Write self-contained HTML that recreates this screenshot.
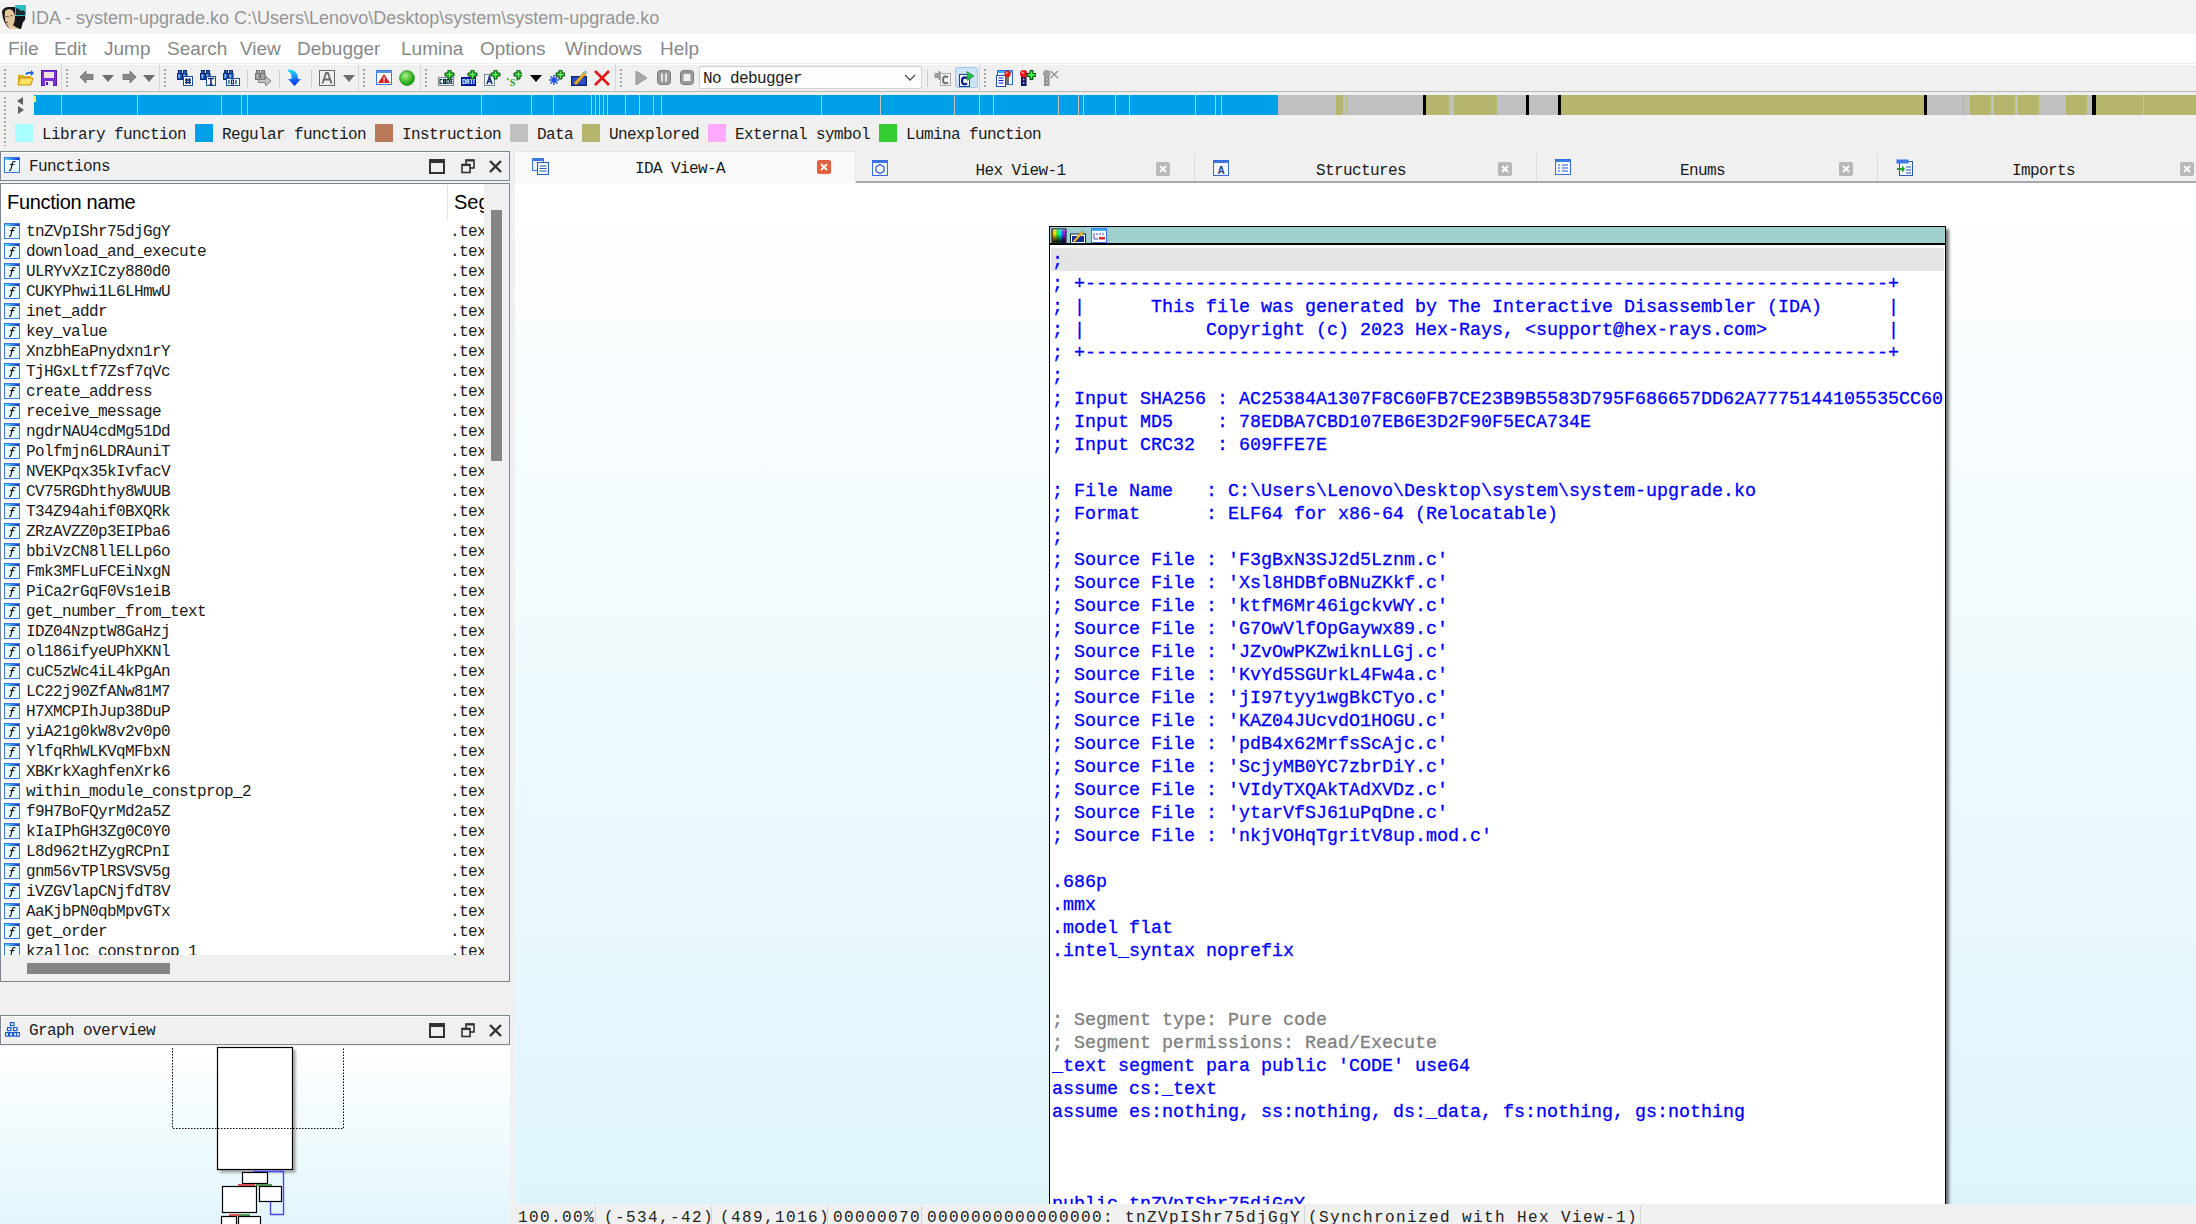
<!DOCTYPE html>
<html><head><meta charset="utf-8"><style>
*{margin:0;padding:0;box-sizing:border-box}
html,body{width:2196px;height:1224px;overflow:hidden;background:#f0f0f0;position:relative;font-family:"Liberation Sans",sans-serif}
.a{position:absolute}
.menu{top:38px;font-size:19px;color:#888888;white-space:nowrap}
.grip{width:2px;height:20px;background:repeating-linear-gradient(transparent 0 1px,#a8a8a8 1px 3px,transparent 3px 4px)}
.sim{font-family:"Liberation Mono",monospace;font-size:16px;letter-spacing:-0.6px;color:#1a1a1a;white-space:nowrap;line-height:16px}
.ida{left:0;font-family:"Liberation Mono",monospace;font-size:18.33px;line-height:23px;white-space:pre;-webkit-text-stroke:0.3px currentColor}
.stat{top:1208px;font-family:"Liberation Mono",monospace;font-size:16px;letter-spacing:1.4px;line-height:20px;white-space:pre;color:#222}
</style></head><body>
<div class="a" style="left:0;top:0;width:2196px;height:34px;background:#f3f3f3"></div>
<svg class="a" style="left:0;top:0" width="30" height="34" viewBox="0 0 30 34">
<path d="M2 12 Q3 7 9 7 L15 7 L15 16 L25 16 Q26 20 23 22 Q22 26 21 29 L10 29 Q3 24 2 12Z" fill="#15161a"/>
<path d="M5 11 Q8 8 12 10 Q15 13 15 18 Q15 22 13 25 Q15 27 20 29 L9 29 Q9 27 7 25 Q4 21 5 11Z" fill="#e2c9a0"/>
<path d="M5 17 Q7 16 9 17 M10 16 Q12 15 13 16" stroke="#8a7a60" stroke-width="1"/>
<path d="M6 22 Q7 23 8 22" stroke="#b04030" stroke-width="1.2"/>
<rect x="15" y="5" width="11" height="11" rx="1" fill="#30bcc4"/>
<path d="M16 8 L19 9 L21 11 L23 10 L25 12 V15 H16Z" fill="#1a2a30"/>
</svg>
<div class="a" style="left:31px;top:8px;font-size:18px;color:#959595;white-space:nowrap">IDA - system-upgrade.ko C:\Users\Lenovo\Desktop\system\system-upgrade.ko</div>

<div class="a" style="left:0;top:34px;width:2196px;height:29px;background:#fff"></div>
<div class="a menu" style="left:8px">File</div>
<div class="a menu" style="left:54px">Edit</div>
<div class="a menu" style="left:104px">Jump</div>
<div class="a menu" style="left:167px">Search</div>
<div class="a menu" style="left:240px">View</div>
<div class="a menu" style="left:297px">Debugger</div>
<div class="a menu" style="left:401px">Lumina</div>
<div class="a menu" style="left:480px">Options</div>
<div class="a menu" style="left:565px">Windows</div>
<div class="a menu" style="left:660px">Help</div>
<div class="a" style="left:0;top:63px;width:2196px;height:29px;background:#f0f0f0;border-bottom:1px solid #b8b8b8;border-top:1px solid #f0f0f0;box-shadow:inset 0 1px 0 #fff"></div>
<div class="a grip" style="left:4px;top:68px"></div>
<div class="a grip" style="left:66px;top:68px"></div>
<div class="a grip" style="left:164px;top:68px"></div>
<div class="a grip" style="left:363px;top:68px"></div>
<div class="a grip" style="left:425px;top:68px"></div>
<div class="a grip" style="left:620px;top:68px"></div>
<div class="a grip" style="left:984px;top:68px"></div>
<div class="a" style="left:61px;top:64px;width:1px;height:27px;background:#d6d6d6"></div>
<div class="a" style="left:159px;top:64px;width:1px;height:27px;background:#d6d6d6"></div>
<div class="a" style="left:358px;top:64px;width:1px;height:27px;background:#d6d6d6"></div>
<div class="a" style="left:420px;top:64px;width:1px;height:27px;background:#d6d6d6"></div>
<div class="a" style="left:615px;top:64px;width:1px;height:27px;background:#d6d6d6"></div>
<div class="a" style="left:979px;top:64px;width:1px;height:27px;background:#d6d6d6"></div>
<div class="a" style="left:247px;top:70px;width:1px;height:17px;background:#cfcfcf"></div>
<div class="a" style="left:279px;top:70px;width:1px;height:17px;background:#cfcfcf"></div>
<div class="a" style="left:311px;top:70px;width:1px;height:17px;background:#cfcfcf"></div>
<div class="a" style="left:927px;top:70px;width:1px;height:17px;background:#cfcfcf"></div>
<svg class="a" style="left:17px;top:70px" width="17" height="16" viewBox="0 0 17 16"><path d="M1 5 H6 L7 6 H14 V15 H1Z" fill="#e0a820"/><path d="M3 8 H16 L14 15 H1Z" fill="#ffe060" stroke="#c89010" stroke-width="1"/><path d="M8 4 Q10 1 14 2 L14 0 L17 3 L14 6 L14 4 Q11 3 9 5Z" fill="#2060e0"/></svg>
<svg class="a" style="left:41px;top:70px" width="16" height="16" viewBox="0 0 16 16"><rect x="0.5" y="0.5" width="15" height="15" fill="#7a30d8" stroke="#5a18b0"/><rect x="3" y="2" width="10" height="6" fill="#f0e0e0"/><rect x="4" y="11" width="8" height="5" fill="#e8e8f8"/><rect x="5" y="12" width="2" height="3" fill="#5a18b0"/></svg>
<svg class="a" style="left:80px;top:70px" width="14" height="14" viewBox="0 0 14 14"><path d="M0 7 L6 1 V4.5 H13 V9.5 H6 V13Z" fill="#8a8a8a" stroke="#6a6a6a" stroke-width="0.8"/></svg>
<svg class="a" style="left:102px;top:75px" width="12" height="7" viewBox="0 0 12 7"><path d="M0 0 H12 L6 7Z" fill="#6e6e6e"/></svg>
<svg class="a" style="left:122px;top:70px" width="14" height="14" viewBox="0 0 14 14"><path d="M14 7 L8 1 V4.5 H1 V9.5 H8 V13Z" fill="#8a8a8a" stroke="#6a6a6a" stroke-width="0.8"/></svg>
<svg class="a" style="left:143px;top:75px" width="12" height="7" viewBox="0 0 12 7"><path d="M0 0 H12 L6 7Z" fill="#6e6e6e"/></svg>
<svg class="a" style="left:177px;top:70px" width="17" height="16" viewBox="0 0 17 16"><g stroke="#0a2a70" stroke-width="1"><rect x="1.5" y="0.5" width="3" height="3" fill="#2a62c8"/><rect x="6.5" y="0.5" width="3" height="3" fill="#2a62c8"/><rect x="0.5" y="3.5" width="4.5" height="6" fill="#2a62c8"/><rect x="5.5" y="3.5" width="4.5" height="6" fill="#2a62c8"/></g><rect x="1.5" y="4.5" width="1.5" height="3" fill="#8ec8f8"/><rect x="6.5" y="4.5" width="1.5" height="3" fill="#8ec8f8"/><rect x="6.5" y="6.5" width="9" height="9" fill="#fff" stroke="#1a4e9a"/><path d="M9.5 8 V14 M12.5 8 V14 M8 10 H14 M8 12.5 H14" stroke="#0c2e6a" stroke-width="1.3"/></svg>
<svg class="a" style="left:200px;top:70px" width="17" height="16" viewBox="0 0 17 16"><g stroke="#0a2a70" stroke-width="1"><rect x="1.5" y="0.5" width="3" height="3" fill="#2a62c8"/><rect x="6.5" y="0.5" width="3" height="3" fill="#2a62c8"/><rect x="0.5" y="3.5" width="4.5" height="6" fill="#2a62c8"/><rect x="5.5" y="3.5" width="4.5" height="6" fill="#2a62c8"/></g><rect x="1.5" y="4.5" width="1.5" height="3" fill="#8ec8f8"/><rect x="6.5" y="4.5" width="1.5" height="3" fill="#8ec8f8"/><rect x="6.5" y="6.5" width="9" height="9" fill="#fff" stroke="#1a4e9a"/><path d="M8 8.5 H14 M11 8.5 V14.5 M9.5 14.5 H12.5" stroke="#0c2e6a" stroke-width="1.6"/></svg>
<svg class="a" style="left:223px;top:70px" width="17" height="16" viewBox="0 0 17 16"><g stroke="#0a2a70" stroke-width="1"><rect x="1.5" y="0.5" width="3" height="3" fill="#2a62c8"/><rect x="6.5" y="0.5" width="3" height="3" fill="#2a62c8"/><rect x="0.5" y="3.5" width="4.5" height="6" fill="#2a62c8"/><rect x="5.5" y="3.5" width="4.5" height="6" fill="#2a62c8"/></g><rect x="1.5" y="4.5" width="1.5" height="3" fill="#8ec8f8"/><rect x="6.5" y="4.5" width="1.5" height="3" fill="#8ec8f8"/><rect x="3.5" y="8.5" width="13" height="7" fill="#fff" stroke="#1a4e9a"/><path d="M6 10 V14 M8.5 10 H10.5 V14 H8.5Z M13 10 V14" stroke="#0c2e6a" stroke-width="1.2" fill="none"/></svg>
<svg class="a" style="left:255px;top:70px" width="17" height="16" viewBox="0 0 17 16"><g stroke="#707070" stroke-width="1"><rect x="1.5" y="0.5" width="3" height="3" fill="#a8a8a8"/><rect x="6.5" y="0.5" width="3" height="3" fill="#a8a8a8"/><rect x="0.5" y="3.5" width="4.5" height="6" fill="#a8a8a8"/><rect x="5.5" y="3.5" width="4.5" height="6" fill="#a8a8a8"/></g><path d="M3.5 9.5 H10.5 V6 L16 11 L10.5 16 V12.5 H3.5Z" fill="#c4c4c4" stroke="#808080" stroke-width="1"/></svg>
<svg class="a" style="left:287px;top:69px" width="15" height="18" viewBox="0 0 15 18"><defs><linearGradient id="ba" x1="0" y1="0" x2="0" y2="1"><stop offset="0" stop-color="#30e0f8"/><stop offset="1" stop-color="#0020f0"/></linearGradient></defs><path d="M1 0.5 Q11 0 11 10 H14 L7.5 17 L1 10 H4.5 Q5 3 1 2.5Z" fill="url(#ba)"/></svg>
<svg class="a" style="left:319px;top:70px" width="16" height="16" viewBox="0 0 16 16"><rect x="0.5" y="0.5" width="15" height="15" fill="none" stroke="#6a6a6a"/><path d="M3.5 13.5 L7 3 H9 L12.5 13.5 M5 9.5 H11" stroke="#6a6a6a" stroke-width="1.8" fill="none"/></svg>
<svg class="a" style="left:343px;top:75px" width="12" height="7" viewBox="0 0 12 7"><path d="M0 0 H12 L6 7Z" fill="#6e6e6e"/></svg>
<svg class="a" style="left:376px;top:70px" width="16" height="15" viewBox="0 0 16 15"><rect x="0.5" y="0.5" width="15" height="14" fill="#fff" stroke="#3c7ad8"/><rect x="1" y="1" width="14" height="2" fill="#5a9ae8"/><path d="M8 4 L14 13 H2Z" fill="#d82020"/><rect x="7.4" y="7" width="1.2" height="3.5" fill="#fff"/><rect x="7.4" y="11" width="1.2" height="1.2" fill="#fff"/></svg>
<svg class="a" style="left:399px;top:70px" width="16" height="16" viewBox="0 0 16 16"><defs><radialGradient id="gb" cx="0.4" cy="0.35" r="0.6"><stop offset="0" stop-color="#a8f080"/><stop offset="1" stop-color="#18a010"/></radialGradient></defs><circle cx="8" cy="8" r="7.5" fill="url(#gb)" stroke="#208818" stroke-width="0.6"/></svg>
<svg class="a" style="left:437px;top:70px" width="18" height="16" viewBox="0 0 18 16"><rect x="1.5" y="7.5" width="15" height="8" fill="#eef4fc" stroke="#7a8894"/><g stroke="#0a2a38" stroke-width="1.1" fill="none"><path d="M5 9.5 H3 V13.5 H5"/><rect x="6.5" y="9.5" width="2" height="4"/><path d="M10 9.5 H11.5 L12.5 10.5 V12.5 L11.5 13.5 H10Z"/><path d="M15.5 9.5 H14 V13.5 H15.5 M14 11.5 H15.5"/></g><path d="M11.0 0.0 h3 v3 h3 v3 h-3 v3 h-3 v-3 h-3 v-3 h3z" fill="#28d028" stroke="#0a4a0a" stroke-width="1"/><path d="M12.5 1.5 V7.5 M9.5 4.5 H15.5" stroke="#70f070" stroke-width="0.8"/></svg>
<svg class="a" style="left:461px;top:70px" width="18" height="16" viewBox="0 0 18 16"><rect x="0.5" y="7.5" width="14" height="8" fill="#1020c0" stroke="#001080"/><g stroke="#c0f4ff" stroke-width="1.1" fill="none"><path d="M2 9.5 H3.5 L4.5 10.5 V12.5 L3.5 13.5 H2Z"/><path d="M5.8 14 V10 L6.8 9.3 L7.8 10 V14 M5.8 11.8 H7.8"/><path d="M9 9.5 H12 M10.5 9.5 V14"/><path d="M12.8 14 V10 L13.5 9.3 L14 10"/></g><path d="M10.0 0.0 h3 v3 h3 v3 h-3 v3 h-3 v-3 h-3 v-3 h3z" fill="#28d028" stroke="#0a4a0a" stroke-width="1"/><path d="M11.5 1.5 V7.5 M8.5 4.5 H14.5" stroke="#70f070" stroke-width="0.8"/></svg>
<svg class="a" style="left:484px;top:70px" width="18" height="16" viewBox="0 0 18 16"><rect x="0.5" y="4.5" width="10" height="11" fill="#eef4fc" stroke="#7a8894"/><path d="M3 14 L5.5 7 L8 14 M4 11.5 H7" stroke="#0a2a70" stroke-width="1.5" fill="none"/><circle cx="5.5" cy="6.5" r="1" fill="#0a2a70"/><path d="M10.0 0.0 h3 v3 h3 v3 h-3 v3 h-3 v-3 h-3 v-3 h3z" fill="#28d028" stroke="#0a4a0a" stroke-width="1"/><path d="M11.5 1.5 V7.5 M8.5 4.5 H14.5" stroke="#70f070" stroke-width="0.8"/></svg>
<svg class="a" style="left:506px;top:70px" width="16" height="16" viewBox="0 0 16 16"><text x="6.5" y="15.5" font-size="10" font-weight="bold" text-anchor="middle" fill="#2a9a1a" font-family="Liberation Serif">S</text><path d="M2 8 Q1.5 9.5 2.5 10 M11 8.5 Q11.5 10 10.5 10.5" stroke="#2a9a1a" stroke-width="1.3" fill="none"/><path d="M11.0 0.0 h3 v3 h3 v3 h-3 v3 h-3 v-3 h-3 v-3 h3z" fill="#28d028" stroke="#0a4a0a" stroke-width="1"/><path d="M12.5 1.5 V7.5 M9.5 4.5 H15.5" stroke="#70f070" stroke-width="0.8"/></svg>
<svg class="a" style="left:530px;top:75px" width="12" height="7" viewBox="0 0 12 7"><path d="M0 0 H12 L6 7Z" fill="#000"/></svg>
<svg class="a" style="left:548px;top:70px" width="17" height="16" viewBox="0 0 17 16"><path d="M6 5 V15 M1 10 H11 M2.5 6.5 L9.5 13.5 M9.5 6.5 L2.5 13.5" stroke="#2050e0" stroke-width="1.5"/><path d="M11.0 0.0 h3 v3 h3 v3 h-3 v3 h-3 v-3 h-3 v-3 h3z" fill="#28d028" stroke="#0a4a0a" stroke-width="1"/><path d="M12.5 1.5 V7.5 M9.5 4.5 H15.5" stroke="#70f070" stroke-width="0.8"/></svg>
<svg class="a" style="left:571px;top:70px" width="17" height="16" viewBox="0 0 17 16"><rect x="0.5" y="6.5" width="15" height="9" fill="#2040b0" stroke="#102070"/><rect x="2" y="8" width="12" height="6" fill="#3050c8"/><path d="M3 13 L13 2 L15 4 L5 15Z" fill="#f0b020" stroke="#a07010" stroke-width="0.6"/><circle cx="14.5" cy="2" r="1.5" fill="#80c0f0"/></svg>
<svg class="a" style="left:594px;top:70px" width="16" height="16" viewBox="0 0 16 16"><path d="M1 1 L15 15 M15 1 L1 15" stroke="#e01818" stroke-width="2.6"/></svg>
<svg class="a" style="left:635px;top:71px" width="13" height="14" viewBox="0 0 13 14"><path d="M1 0 L12 7 L1 14Z" fill="#a8a8a8" stroke="#8a8a8a" stroke-width="0.8"/></svg>
<svg class="a" style="left:657px;top:70px" width="14" height="15" viewBox="0 0 14 15"><rect x="0.5" y="0.5" width="13" height="14" rx="3" fill="#9a9a9a" stroke="#7a7a7a"/><rect x="4" y="3.5" width="2" height="8" fill="#e8e8e8"/><rect x="8" y="3.5" width="2" height="8" fill="#e8e8e8"/></svg>
<svg class="a" style="left:680px;top:70px" width="14" height="15" viewBox="0 0 14 15"><rect x="0.5" y="0.5" width="13" height="14" rx="3" fill="#9a9a9a" stroke="#7a7a7a"/><rect x="3.5" y="4" width="7" height="7" fill="#f0f0f0"/></svg>
<div class="a" style="left:699px;top:66px;width:223px;height:23px;background:#fdfdfd;border:1px solid #d0d0d0;border-radius:2px"></div>
<div class="a sim" style="left:703px;top:71px">No debugger</div>
<svg class="a" style="left:904px;top:74px" width="12" height="8" viewBox="0 0 12 8"><path d="M1 1 L6 6 L11 1" stroke="#505050" stroke-width="1.3" fill="none"/></svg>
<svg class="a" style="left:934px;top:69px" width="18" height="18" viewBox="0 0 18 18"><path d="M1 4.5 H5 V2 L9.5 6.5 L5 11 V8.5 H1Z" fill="#a0a0a0" stroke="#808080" stroke-width="0.7"/><rect x="6.5" y="4.5" width="10" height="12" fill="#f8f8f8" stroke="#a8a8a8"/><path d="M14 8.5 Q13 7.3 11.5 7.3 Q9 7.5 9 11 Q9 14.3 11.5 14.3 Q13 14.3 14 13.3" stroke="#707070" stroke-width="2" fill="none"/></svg>
<div class="a" style="left:955px;top:67px;width:23px;height:21px;background:#cce4f7;border:1px solid #99c9ef;border-radius:3px"></div>
<svg class="a" style="left:958px;top:70px" width="18" height="18" viewBox="0 0 18 18"><rect x="1.5" y="4.5" width="10" height="12" fill="#f4f8ff" stroke="#1a3e90"/><path d="M9 8.5 Q8 7.3 6.5 7.3 Q4 7.5 4 11 Q4 14.3 6.5 14.3 Q8 14.3 9 13.3" stroke="#0a1a80" stroke-width="2.2" fill="none"/><path d="M9 1.5 L16 6 L9 10.5Z" fill="#20c040" stroke="#108020" stroke-width="0.6"/></svg>
<svg class="a" style="left:996px;top:69px" width="18" height="18" viewBox="0 0 18 18"><rect x="1.5" y="1.5" width="15" height="14" fill="#eaf4ff" stroke="#2a6ad8"/><rect x="2" y="2" width="14" height="2" fill="#40b0f0"/><rect x="0.5" y="6.5" width="9" height="11" fill="#f8fbff" stroke="#2050a0"/><path d="M2.5 9 H7.5 M2.5 11.5 H7.5 M2.5 14 H7.5" stroke="#1020c0" stroke-width="1.1"/><rect x="10" y="7" width="3" height="8" fill="#707070"/><circle cx="11.5" cy="5" r="3.2" fill="#e81818"/><circle cx="10.8" cy="4" r="1" fill="#ff9090"/></svg>
<svg class="a" style="left:1018px;top:69px" width="18" height="18" viewBox="0 0 18 18"><rect x="3" y="7" width="5.5" height="10" fill="#0a1060"/><circle cx="5.7" cy="10.5" r="1" fill="#b0b0a0"/><circle cx="5.7" cy="14" r="1" fill="#b0b0a0"/><circle cx="5.7" cy="4.8" r="3.7" fill="#e81818"/><circle cx="4.8" cy="3.6" r="1.2" fill="#ff9090"/><path d="M12.0 1.5 h3 v3 h3 v3 h-3 v3 h-3 v-3 h-3 v-3 h3z" fill="#28d028" stroke="#0a4a0a" stroke-width="1"/><path d="M13.5 3 V9 M10.5 6 H16.5" stroke="#70f070" stroke-width="0.8"/></svg>
<svg class="a" style="left:1041px;top:69px" width="20" height="18" viewBox="0 0 20 18"><rect x="3" y="7" width="5.5" height="10" fill="#909090"/><circle cx="5.7" cy="10.5" r="1" fill="#c8c8c8"/><circle cx="5.7" cy="14" r="1" fill="#c8c8c8"/><circle cx="5.7" cy="4.8" r="3.7" fill="#a0a0a0"/><path d="M9.5 2 L17 9 M17 2 L9.5 9" stroke="#909090" stroke-width="1.3"/></svg>
<div class="a grip" style="left:4px;top:96px;height:50px"></div>
<svg class="a" style="left:16px;top:96px" width="10" height="18" viewBox="0 0 10 18"><path d="M7 1 L1 5 L7 9Z M2 10 L8 14 L2 18Z" fill="#606060"/></svg>
<div class="a" style="left:34px;top:95px;width:1244px;height:20px;background:#00a0e8"></div>
<div class="a" style="left:1278px;top:95px;width:58px;height:20px;background:#c0c0c0"></div>
<div class="a" style="left:1336px;top:95px;width:7px;height:20px;background:#b5b56d"></div>
<div class="a" style="left:1343px;top:95px;width:2px;height:20px;background:#c0c0c0"></div>
<div class="a" style="left:1345px;top:95px;width:2px;height:20px;background:#b5b56d"></div>
<div class="a" style="left:1347px;top:95px;width:76px;height:20px;background:#c0c0c0"></div>
<div class="a" style="left:1423px;top:95px;width:3px;height:20px;background:#000"></div>
<div class="a" style="left:1426px;top:95px;width:23px;height:20px;background:#b5b56d"></div>
<div class="a" style="left:1449px;top:95px;width:5px;height:20px;background:#c0c0c0"></div>
<div class="a" style="left:1454px;top:95px;width:43px;height:20px;background:#b5b56d"></div>
<div class="a" style="left:1497px;top:95px;width:29px;height:20px;background:#c0c0c0"></div>
<div class="a" style="left:1526px;top:95px;width:3px;height:20px;background:#000"></div>
<div class="a" style="left:1529px;top:95px;width:29px;height:20px;background:#c0c0c0"></div>
<div class="a" style="left:1558px;top:95px;width:3px;height:20px;background:#000"></div>
<div class="a" style="left:1561px;top:95px;width:363px;height:20px;background:#b5b56d"></div>
<div class="a" style="left:1924px;top:95px;width:3px;height:20px;background:#000"></div>
<div class="a" style="left:1927px;top:95px;width:36px;height:20px;background:#c0c0c0"></div>
<div class="a" style="left:1963px;top:95px;width:1px;height:20px;background:#b5b56d"></div>
<div class="a" style="left:1964px;top:95px;width:6px;height:20px;background:#c0c0c0"></div>
<div class="a" style="left:1970px;top:95px;width:21px;height:20px;background:#b5b56d"></div>
<div class="a" style="left:1991px;top:95px;width:3px;height:20px;background:#c0c0c0"></div>
<div class="a" style="left:1994px;top:95px;width:21px;height:20px;background:#b5b56d"></div>
<div class="a" style="left:2015px;top:95px;width:3px;height:20px;background:#c0c0c0"></div>
<div class="a" style="left:2018px;top:95px;width:21px;height:20px;background:#b5b56d"></div>
<div class="a" style="left:2039px;top:95px;width:27px;height:20px;background:#c0c0c0"></div>
<div class="a" style="left:2066px;top:95px;width:21px;height:20px;background:#b5b56d"></div>
<div class="a" style="left:2087px;top:95px;width:5px;height:20px;background:#c0c0c0"></div>
<div class="a" style="left:2092px;top:95px;width:4px;height:20px;background:#000"></div>
<div class="a" style="left:2096px;top:95px;width:100px;height:20px;background:#b5b56d"></div>
<div class="a" style="left:61px;top:95px;width:1px;height:20px;background:#c4c0bc"></div>
<div class="a" style="left:137px;top:95px;width:1px;height:20px;background:#c4c0bc"></div>
<div class="a" style="left:221px;top:95px;width:1px;height:20px;background:#c4c0bc"></div>
<div class="a" style="left:241px;top:95px;width:1px;height:20px;background:#c4c0bc"></div>
<div class="a" style="left:247px;top:95px;width:1px;height:20px;background:#c4c0bc"></div>
<div class="a" style="left:481px;top:95px;width:1px;height:20px;background:#c4c0bc"></div>
<div class="a" style="left:531px;top:95px;width:1px;height:20px;background:#c4c0bc"></div>
<div class="a" style="left:553px;top:95px;width:1px;height:20px;background:#c4c0bc"></div>
<div class="a" style="left:591px;top:95px;width:1px;height:20px;background:#c4c0bc"></div>
<div class="a" style="left:595px;top:95px;width:1px;height:20px;background:#c4c0bc"></div>
<div class="a" style="left:599px;top:95px;width:1px;height:20px;background:#c4c0bc"></div>
<div class="a" style="left:603px;top:95px;width:1px;height:20px;background:#c4c0bc"></div>
<div class="a" style="left:607px;top:95px;width:1px;height:20px;background:#c4c0bc"></div>
<div class="a" style="left:625px;top:95px;width:1px;height:20px;background:#c4c0bc"></div>
<div class="a" style="left:639px;top:95px;width:1px;height:20px;background:#c4c0bc"></div>
<div class="a" style="left:653px;top:95px;width:1px;height:20px;background:#c4c0bc"></div>
<div class="a" style="left:661px;top:95px;width:1px;height:20px;background:#c4c0bc"></div>
<div class="a" style="left:821px;top:95px;width:1px;height:20px;background:#c4c0bc"></div>
<div class="a" style="left:880px;top:95px;width:1px;height:20px;background:#c4c0bc"></div>
<div class="a" style="left:954px;top:95px;width:1px;height:20px;background:#c4c0bc"></div>
<div class="a" style="left:979px;top:95px;width:1px;height:20px;background:#c4c0bc"></div>
<div class="a" style="left:993px;top:95px;width:1px;height:20px;background:#c4c0bc"></div>
<div class="a" style="left:1058px;top:95px;width:1px;height:20px;background:#c4c0bc"></div>
<div class="a" style="left:1078px;top:95px;width:1px;height:20px;background:#c4c0bc"></div>
<div class="a" style="left:1083px;top:95px;width:1px;height:20px;background:#c4c0bc"></div>
<div class="a" style="left:1115px;top:95px;width:1px;height:20px;background:#c4c0bc"></div>
<div class="a" style="left:1129px;top:95px;width:1px;height:20px;background:#c4c0bc"></div>
<div class="a" style="left:1195px;top:95px;width:1px;height:20px;background:#c4c0bc"></div>
<div class="a" style="left:1215px;top:95px;width:1px;height:20px;background:#c4c0bc"></div>
<div class="a" style="left:1221px;top:95px;width:1px;height:20px;background:#c4c0bc"></div>
<div class="a" style="left:1343px;top:95px;width:1px;height:20px;background:#c4c0bc"></div>
<div class="a" style="left:1345px;top:95px;width:1px;height:20px;background:#c4c0bc"></div>
<div class="a" style="left:2089px;top:95px;width:1px;height:20px;background:#c4c0bc"></div>
<div class="a" style="left:2143px;top:95px;width:1px;height:20px;background:#c4c0bc"></div>
<div class="a" style="left:34px;top:96px;width:2px;height:6px;background:#f0f060"></div>
<div class="a" style="left:15px;top:124px;width:18px;height:18px;background:#aaffff"></div>
<div class="a sim" style="left:42px;top:127px">Library function</div>
<div class="a" style="left:195px;top:124px;width:18px;height:18px;background:#00a0e8"></div>
<div class="a sim" style="left:222px;top:127px">Regular function</div>
<div class="a" style="left:375px;top:124px;width:18px;height:18px;background:#b87a58"></div>
<div class="a sim" style="left:402px;top:127px">Instruction</div>
<div class="a" style="left:510px;top:124px;width:18px;height:18px;background:#c0c0c0"></div>
<div class="a sim" style="left:537px;top:127px">Data</div>
<div class="a" style="left:582px;top:124px;width:18px;height:18px;background:#b5b56d"></div>
<div class="a sim" style="left:609px;top:127px">Unexplored</div>
<div class="a" style="left:708px;top:124px;width:18px;height:18px;background:#ffaaff"></div>
<div class="a sim" style="left:735px;top:127px">External symbol</div>
<div class="a" style="left:879px;top:124px;width:18px;height:18px;background:#33cc33"></div>
<div class="a sim" style="left:906px;top:127px">Lumina function</div>
<div class="a" style="left:0;top:151px;width:510px;height:30px;background:#f0f0f0;border:1px solid #7d8492;box-shadow:inset 1px 1px 0 #fff"></div>
<svg class="a" style="left:4px;top:157px" width="16" height="16" viewBox="0 0 16 16"><defs><linearGradient id="fbar" x1="0" x2="1"><stop offset="0" stop-color="#50e0ff"/><stop offset="1" stop-color="#1830c8"/></linearGradient><linearGradient id="fbg" x1="0" y1="0" x2="1" y2="1"><stop offset="0" stop-color="#ffffff"/><stop offset="1" stop-color="#d8f8ff"/></linearGradient></defs><rect x="0.5" y="0.5" width="15" height="15" fill="url(#fbg)" stroke="#3a78e0"/><rect x="1" y="1" width="14" height="2" fill="url(#fbar)"/><path d="M11.5 5 Q10.5 4.2 9.5 4.6 Q8.6 5 8.3 6.5 L7 12 Q6.6 13.6 5 13.3" stroke="#101010" stroke-width="1.1" fill="none"/><path d="M6 7.6 H10.4" stroke="#101010" stroke-width="1"/></svg>
<div class="a sim" style="left:29px;top:159px">Functions</div>
<svg class="a" style="left:429px;top:159px" width="74" height="15" viewBox="0 0 74 15"><rect x="1" y="1" width="14" height="13" fill="none" stroke="#333" stroke-width="2"/><rect x="1" y="1" width="14" height="3" fill="#333"/><rect x="37" y="1" width="8" height="8" fill="none" stroke="#333" stroke-width="1.6"/><rect x="37" y="0.5" width="8" height="2" fill="#333"/><rect x="33" y="5.5" width="8" height="8" fill="#f0f0f0" stroke="#333" stroke-width="1.6"/><rect x="33" y="5" width="8" height="2" fill="#333"/><path d="M61 2 L72 13 M72 2 L61 13" stroke="#333" stroke-width="2.4"/></svg>
<div class="a" style="left:0;top:183px;width:510px;height:799px;background:#fff;border:1px solid #7d8492"></div>
<div class="a" style="left:7px;top:191px;font-size:20px;letter-spacing:-0.3px;color:#000;white-space:nowrap">Function name</div>
<div class="a" style="left:447px;top:185px;width:1px;height:35px;background:#e4e4e4"></div>
<div class="a" style="left:454px;top:191px;width:30px;overflow:hidden;font-size:20px;color:#000;white-space:nowrap">Seg</div>
<div class="a" style="left:1px;top:221px;width:483px;height:734px;overflow:hidden"><svg class="a" style="left:3px;top:2px" width="16" height="16" viewBox="0 0 16 16"><defs><linearGradient id="fbar" x1="0" x2="1"><stop offset="0" stop-color="#50e0ff"/><stop offset="1" stop-color="#1830c8"/></linearGradient><linearGradient id="fbg" x1="0" y1="0" x2="1" y2="1"><stop offset="0" stop-color="#ffffff"/><stop offset="1" stop-color="#d8f8ff"/></linearGradient></defs><rect x="0.5" y="0.5" width="15" height="15" fill="url(#fbg)" stroke="#3a78e0"/><rect x="1" y="1" width="14" height="2" fill="url(#fbar)"/><path d="M11.5 5 Q10.5 4.2 9.5 4.6 Q8.6 5 8.3 6.5 L7 12 Q6.6 13.6 5 13.3" stroke="#101010" stroke-width="1.1" fill="none"/><path d="M6 7.6 H10.4" stroke="#101010" stroke-width="1"/></svg><div class="a sim" style="left:25px;top:3px">tnZVpIShr75djGgY</div><div class="a sim" style="left:449px;top:3px">.text</div><svg class="a" style="left:3px;top:22px" width="16" height="16" viewBox="0 0 16 16"><defs><linearGradient id="fbar" x1="0" x2="1"><stop offset="0" stop-color="#50e0ff"/><stop offset="1" stop-color="#1830c8"/></linearGradient><linearGradient id="fbg" x1="0" y1="0" x2="1" y2="1"><stop offset="0" stop-color="#ffffff"/><stop offset="1" stop-color="#d8f8ff"/></linearGradient></defs><rect x="0.5" y="0.5" width="15" height="15" fill="url(#fbg)" stroke="#3a78e0"/><rect x="1" y="1" width="14" height="2" fill="url(#fbar)"/><path d="M11.5 5 Q10.5 4.2 9.5 4.6 Q8.6 5 8.3 6.5 L7 12 Q6.6 13.6 5 13.3" stroke="#101010" stroke-width="1.1" fill="none"/><path d="M6 7.6 H10.4" stroke="#101010" stroke-width="1"/></svg><div class="a sim" style="left:25px;top:23px">download_and_execute</div><div class="a sim" style="left:449px;top:23px">.text</div><svg class="a" style="left:3px;top:42px" width="16" height="16" viewBox="0 0 16 16"><defs><linearGradient id="fbar" x1="0" x2="1"><stop offset="0" stop-color="#50e0ff"/><stop offset="1" stop-color="#1830c8"/></linearGradient><linearGradient id="fbg" x1="0" y1="0" x2="1" y2="1"><stop offset="0" stop-color="#ffffff"/><stop offset="1" stop-color="#d8f8ff"/></linearGradient></defs><rect x="0.5" y="0.5" width="15" height="15" fill="url(#fbg)" stroke="#3a78e0"/><rect x="1" y="1" width="14" height="2" fill="url(#fbar)"/><path d="M11.5 5 Q10.5 4.2 9.5 4.6 Q8.6 5 8.3 6.5 L7 12 Q6.6 13.6 5 13.3" stroke="#101010" stroke-width="1.1" fill="none"/><path d="M6 7.6 H10.4" stroke="#101010" stroke-width="1"/></svg><div class="a sim" style="left:25px;top:43px">ULRYvXzICzy880d0</div><div class="a sim" style="left:449px;top:43px">.text</div><svg class="a" style="left:3px;top:62px" width="16" height="16" viewBox="0 0 16 16"><defs><linearGradient id="fbar" x1="0" x2="1"><stop offset="0" stop-color="#50e0ff"/><stop offset="1" stop-color="#1830c8"/></linearGradient><linearGradient id="fbg" x1="0" y1="0" x2="1" y2="1"><stop offset="0" stop-color="#ffffff"/><stop offset="1" stop-color="#d8f8ff"/></linearGradient></defs><rect x="0.5" y="0.5" width="15" height="15" fill="url(#fbg)" stroke="#3a78e0"/><rect x="1" y="1" width="14" height="2" fill="url(#fbar)"/><path d="M11.5 5 Q10.5 4.2 9.5 4.6 Q8.6 5 8.3 6.5 L7 12 Q6.6 13.6 5 13.3" stroke="#101010" stroke-width="1.1" fill="none"/><path d="M6 7.6 H10.4" stroke="#101010" stroke-width="1"/></svg><div class="a sim" style="left:25px;top:63px">CUKYPhwi1L6LHmwU</div><div class="a sim" style="left:449px;top:63px">.text</div><svg class="a" style="left:3px;top:82px" width="16" height="16" viewBox="0 0 16 16"><defs><linearGradient id="fbar" x1="0" x2="1"><stop offset="0" stop-color="#50e0ff"/><stop offset="1" stop-color="#1830c8"/></linearGradient><linearGradient id="fbg" x1="0" y1="0" x2="1" y2="1"><stop offset="0" stop-color="#ffffff"/><stop offset="1" stop-color="#d8f8ff"/></linearGradient></defs><rect x="0.5" y="0.5" width="15" height="15" fill="url(#fbg)" stroke="#3a78e0"/><rect x="1" y="1" width="14" height="2" fill="url(#fbar)"/><path d="M11.5 5 Q10.5 4.2 9.5 4.6 Q8.6 5 8.3 6.5 L7 12 Q6.6 13.6 5 13.3" stroke="#101010" stroke-width="1.1" fill="none"/><path d="M6 7.6 H10.4" stroke="#101010" stroke-width="1"/></svg><div class="a sim" style="left:25px;top:83px">inet_addr</div><div class="a sim" style="left:449px;top:83px">.text</div><svg class="a" style="left:3px;top:102px" width="16" height="16" viewBox="0 0 16 16"><defs><linearGradient id="fbar" x1="0" x2="1"><stop offset="0" stop-color="#50e0ff"/><stop offset="1" stop-color="#1830c8"/></linearGradient><linearGradient id="fbg" x1="0" y1="0" x2="1" y2="1"><stop offset="0" stop-color="#ffffff"/><stop offset="1" stop-color="#d8f8ff"/></linearGradient></defs><rect x="0.5" y="0.5" width="15" height="15" fill="url(#fbg)" stroke="#3a78e0"/><rect x="1" y="1" width="14" height="2" fill="url(#fbar)"/><path d="M11.5 5 Q10.5 4.2 9.5 4.6 Q8.6 5 8.3 6.5 L7 12 Q6.6 13.6 5 13.3" stroke="#101010" stroke-width="1.1" fill="none"/><path d="M6 7.6 H10.4" stroke="#101010" stroke-width="1"/></svg><div class="a sim" style="left:25px;top:103px">key_value</div><div class="a sim" style="left:449px;top:103px">.text</div><svg class="a" style="left:3px;top:122px" width="16" height="16" viewBox="0 0 16 16"><defs><linearGradient id="fbar" x1="0" x2="1"><stop offset="0" stop-color="#50e0ff"/><stop offset="1" stop-color="#1830c8"/></linearGradient><linearGradient id="fbg" x1="0" y1="0" x2="1" y2="1"><stop offset="0" stop-color="#ffffff"/><stop offset="1" stop-color="#d8f8ff"/></linearGradient></defs><rect x="0.5" y="0.5" width="15" height="15" fill="url(#fbg)" stroke="#3a78e0"/><rect x="1" y="1" width="14" height="2" fill="url(#fbar)"/><path d="M11.5 5 Q10.5 4.2 9.5 4.6 Q8.6 5 8.3 6.5 L7 12 Q6.6 13.6 5 13.3" stroke="#101010" stroke-width="1.1" fill="none"/><path d="M6 7.6 H10.4" stroke="#101010" stroke-width="1"/></svg><div class="a sim" style="left:25px;top:123px">XnzbhEaPnydxn1rY</div><div class="a sim" style="left:449px;top:123px">.text</div><svg class="a" style="left:3px;top:142px" width="16" height="16" viewBox="0 0 16 16"><defs><linearGradient id="fbar" x1="0" x2="1"><stop offset="0" stop-color="#50e0ff"/><stop offset="1" stop-color="#1830c8"/></linearGradient><linearGradient id="fbg" x1="0" y1="0" x2="1" y2="1"><stop offset="0" stop-color="#ffffff"/><stop offset="1" stop-color="#d8f8ff"/></linearGradient></defs><rect x="0.5" y="0.5" width="15" height="15" fill="url(#fbg)" stroke="#3a78e0"/><rect x="1" y="1" width="14" height="2" fill="url(#fbar)"/><path d="M11.5 5 Q10.5 4.2 9.5 4.6 Q8.6 5 8.3 6.5 L7 12 Q6.6 13.6 5 13.3" stroke="#101010" stroke-width="1.1" fill="none"/><path d="M6 7.6 H10.4" stroke="#101010" stroke-width="1"/></svg><div class="a sim" style="left:25px;top:143px">TjHGxLtf7Zsf7qVc</div><div class="a sim" style="left:449px;top:143px">.text</div><svg class="a" style="left:3px;top:162px" width="16" height="16" viewBox="0 0 16 16"><defs><linearGradient id="fbar" x1="0" x2="1"><stop offset="0" stop-color="#50e0ff"/><stop offset="1" stop-color="#1830c8"/></linearGradient><linearGradient id="fbg" x1="0" y1="0" x2="1" y2="1"><stop offset="0" stop-color="#ffffff"/><stop offset="1" stop-color="#d8f8ff"/></linearGradient></defs><rect x="0.5" y="0.5" width="15" height="15" fill="url(#fbg)" stroke="#3a78e0"/><rect x="1" y="1" width="14" height="2" fill="url(#fbar)"/><path d="M11.5 5 Q10.5 4.2 9.5 4.6 Q8.6 5 8.3 6.5 L7 12 Q6.6 13.6 5 13.3" stroke="#101010" stroke-width="1.1" fill="none"/><path d="M6 7.6 H10.4" stroke="#101010" stroke-width="1"/></svg><div class="a sim" style="left:25px;top:163px">create_address</div><div class="a sim" style="left:449px;top:163px">.text</div><svg class="a" style="left:3px;top:182px" width="16" height="16" viewBox="0 0 16 16"><defs><linearGradient id="fbar" x1="0" x2="1"><stop offset="0" stop-color="#50e0ff"/><stop offset="1" stop-color="#1830c8"/></linearGradient><linearGradient id="fbg" x1="0" y1="0" x2="1" y2="1"><stop offset="0" stop-color="#ffffff"/><stop offset="1" stop-color="#d8f8ff"/></linearGradient></defs><rect x="0.5" y="0.5" width="15" height="15" fill="url(#fbg)" stroke="#3a78e0"/><rect x="1" y="1" width="14" height="2" fill="url(#fbar)"/><path d="M11.5 5 Q10.5 4.2 9.5 4.6 Q8.6 5 8.3 6.5 L7 12 Q6.6 13.6 5 13.3" stroke="#101010" stroke-width="1.1" fill="none"/><path d="M6 7.6 H10.4" stroke="#101010" stroke-width="1"/></svg><div class="a sim" style="left:25px;top:183px">receive_message</div><div class="a sim" style="left:449px;top:183px">.text</div><svg class="a" style="left:3px;top:202px" width="16" height="16" viewBox="0 0 16 16"><defs><linearGradient id="fbar" x1="0" x2="1"><stop offset="0" stop-color="#50e0ff"/><stop offset="1" stop-color="#1830c8"/></linearGradient><linearGradient id="fbg" x1="0" y1="0" x2="1" y2="1"><stop offset="0" stop-color="#ffffff"/><stop offset="1" stop-color="#d8f8ff"/></linearGradient></defs><rect x="0.5" y="0.5" width="15" height="15" fill="url(#fbg)" stroke="#3a78e0"/><rect x="1" y="1" width="14" height="2" fill="url(#fbar)"/><path d="M11.5 5 Q10.5 4.2 9.5 4.6 Q8.6 5 8.3 6.5 L7 12 Q6.6 13.6 5 13.3" stroke="#101010" stroke-width="1.1" fill="none"/><path d="M6 7.6 H10.4" stroke="#101010" stroke-width="1"/></svg><div class="a sim" style="left:25px;top:203px">ngdrNAU4cdMg51Dd</div><div class="a sim" style="left:449px;top:203px">.text</div><svg class="a" style="left:3px;top:222px" width="16" height="16" viewBox="0 0 16 16"><defs><linearGradient id="fbar" x1="0" x2="1"><stop offset="0" stop-color="#50e0ff"/><stop offset="1" stop-color="#1830c8"/></linearGradient><linearGradient id="fbg" x1="0" y1="0" x2="1" y2="1"><stop offset="0" stop-color="#ffffff"/><stop offset="1" stop-color="#d8f8ff"/></linearGradient></defs><rect x="0.5" y="0.5" width="15" height="15" fill="url(#fbg)" stroke="#3a78e0"/><rect x="1" y="1" width="14" height="2" fill="url(#fbar)"/><path d="M11.5 5 Q10.5 4.2 9.5 4.6 Q8.6 5 8.3 6.5 L7 12 Q6.6 13.6 5 13.3" stroke="#101010" stroke-width="1.1" fill="none"/><path d="M6 7.6 H10.4" stroke="#101010" stroke-width="1"/></svg><div class="a sim" style="left:25px;top:223px">Polfmjn6LDRAuniT</div><div class="a sim" style="left:449px;top:223px">.text</div><svg class="a" style="left:3px;top:242px" width="16" height="16" viewBox="0 0 16 16"><defs><linearGradient id="fbar" x1="0" x2="1"><stop offset="0" stop-color="#50e0ff"/><stop offset="1" stop-color="#1830c8"/></linearGradient><linearGradient id="fbg" x1="0" y1="0" x2="1" y2="1"><stop offset="0" stop-color="#ffffff"/><stop offset="1" stop-color="#d8f8ff"/></linearGradient></defs><rect x="0.5" y="0.5" width="15" height="15" fill="url(#fbg)" stroke="#3a78e0"/><rect x="1" y="1" width="14" height="2" fill="url(#fbar)"/><path d="M11.5 5 Q10.5 4.2 9.5 4.6 Q8.6 5 8.3 6.5 L7 12 Q6.6 13.6 5 13.3" stroke="#101010" stroke-width="1.1" fill="none"/><path d="M6 7.6 H10.4" stroke="#101010" stroke-width="1"/></svg><div class="a sim" style="left:25px;top:243px">NVEKPqx35kIvfacV</div><div class="a sim" style="left:449px;top:243px">.text</div><svg class="a" style="left:3px;top:262px" width="16" height="16" viewBox="0 0 16 16"><defs><linearGradient id="fbar" x1="0" x2="1"><stop offset="0" stop-color="#50e0ff"/><stop offset="1" stop-color="#1830c8"/></linearGradient><linearGradient id="fbg" x1="0" y1="0" x2="1" y2="1"><stop offset="0" stop-color="#ffffff"/><stop offset="1" stop-color="#d8f8ff"/></linearGradient></defs><rect x="0.5" y="0.5" width="15" height="15" fill="url(#fbg)" stroke="#3a78e0"/><rect x="1" y="1" width="14" height="2" fill="url(#fbar)"/><path d="M11.5 5 Q10.5 4.2 9.5 4.6 Q8.6 5 8.3 6.5 L7 12 Q6.6 13.6 5 13.3" stroke="#101010" stroke-width="1.1" fill="none"/><path d="M6 7.6 H10.4" stroke="#101010" stroke-width="1"/></svg><div class="a sim" style="left:25px;top:263px">CV75RGDhthy8WUUB</div><div class="a sim" style="left:449px;top:263px">.text</div><svg class="a" style="left:3px;top:282px" width="16" height="16" viewBox="0 0 16 16"><defs><linearGradient id="fbar" x1="0" x2="1"><stop offset="0" stop-color="#50e0ff"/><stop offset="1" stop-color="#1830c8"/></linearGradient><linearGradient id="fbg" x1="0" y1="0" x2="1" y2="1"><stop offset="0" stop-color="#ffffff"/><stop offset="1" stop-color="#d8f8ff"/></linearGradient></defs><rect x="0.5" y="0.5" width="15" height="15" fill="url(#fbg)" stroke="#3a78e0"/><rect x="1" y="1" width="14" height="2" fill="url(#fbar)"/><path d="M11.5 5 Q10.5 4.2 9.5 4.6 Q8.6 5 8.3 6.5 L7 12 Q6.6 13.6 5 13.3" stroke="#101010" stroke-width="1.1" fill="none"/><path d="M6 7.6 H10.4" stroke="#101010" stroke-width="1"/></svg><div class="a sim" style="left:25px;top:283px">T34Z94ahif0BXQRk</div><div class="a sim" style="left:449px;top:283px">.text</div><svg class="a" style="left:3px;top:302px" width="16" height="16" viewBox="0 0 16 16"><defs><linearGradient id="fbar" x1="0" x2="1"><stop offset="0" stop-color="#50e0ff"/><stop offset="1" stop-color="#1830c8"/></linearGradient><linearGradient id="fbg" x1="0" y1="0" x2="1" y2="1"><stop offset="0" stop-color="#ffffff"/><stop offset="1" stop-color="#d8f8ff"/></linearGradient></defs><rect x="0.5" y="0.5" width="15" height="15" fill="url(#fbg)" stroke="#3a78e0"/><rect x="1" y="1" width="14" height="2" fill="url(#fbar)"/><path d="M11.5 5 Q10.5 4.2 9.5 4.6 Q8.6 5 8.3 6.5 L7 12 Q6.6 13.6 5 13.3" stroke="#101010" stroke-width="1.1" fill="none"/><path d="M6 7.6 H10.4" stroke="#101010" stroke-width="1"/></svg><div class="a sim" style="left:25px;top:303px">ZRzAVZZ0p3EIPba6</div><div class="a sim" style="left:449px;top:303px">.text</div><svg class="a" style="left:3px;top:322px" width="16" height="16" viewBox="0 0 16 16"><defs><linearGradient id="fbar" x1="0" x2="1"><stop offset="0" stop-color="#50e0ff"/><stop offset="1" stop-color="#1830c8"/></linearGradient><linearGradient id="fbg" x1="0" y1="0" x2="1" y2="1"><stop offset="0" stop-color="#ffffff"/><stop offset="1" stop-color="#d8f8ff"/></linearGradient></defs><rect x="0.5" y="0.5" width="15" height="15" fill="url(#fbg)" stroke="#3a78e0"/><rect x="1" y="1" width="14" height="2" fill="url(#fbar)"/><path d="M11.5 5 Q10.5 4.2 9.5 4.6 Q8.6 5 8.3 6.5 L7 12 Q6.6 13.6 5 13.3" stroke="#101010" stroke-width="1.1" fill="none"/><path d="M6 7.6 H10.4" stroke="#101010" stroke-width="1"/></svg><div class="a sim" style="left:25px;top:323px">bbiVzCN8llELLp6o</div><div class="a sim" style="left:449px;top:323px">.text</div><svg class="a" style="left:3px;top:342px" width="16" height="16" viewBox="0 0 16 16"><defs><linearGradient id="fbar" x1="0" x2="1"><stop offset="0" stop-color="#50e0ff"/><stop offset="1" stop-color="#1830c8"/></linearGradient><linearGradient id="fbg" x1="0" y1="0" x2="1" y2="1"><stop offset="0" stop-color="#ffffff"/><stop offset="1" stop-color="#d8f8ff"/></linearGradient></defs><rect x="0.5" y="0.5" width="15" height="15" fill="url(#fbg)" stroke="#3a78e0"/><rect x="1" y="1" width="14" height="2" fill="url(#fbar)"/><path d="M11.5 5 Q10.5 4.2 9.5 4.6 Q8.6 5 8.3 6.5 L7 12 Q6.6 13.6 5 13.3" stroke="#101010" stroke-width="1.1" fill="none"/><path d="M6 7.6 H10.4" stroke="#101010" stroke-width="1"/></svg><div class="a sim" style="left:25px;top:343px">Fmk3MFLuFCEiNxgN</div><div class="a sim" style="left:449px;top:343px">.text</div><svg class="a" style="left:3px;top:362px" width="16" height="16" viewBox="0 0 16 16"><defs><linearGradient id="fbar" x1="0" x2="1"><stop offset="0" stop-color="#50e0ff"/><stop offset="1" stop-color="#1830c8"/></linearGradient><linearGradient id="fbg" x1="0" y1="0" x2="1" y2="1"><stop offset="0" stop-color="#ffffff"/><stop offset="1" stop-color="#d8f8ff"/></linearGradient></defs><rect x="0.5" y="0.5" width="15" height="15" fill="url(#fbg)" stroke="#3a78e0"/><rect x="1" y="1" width="14" height="2" fill="url(#fbar)"/><path d="M11.5 5 Q10.5 4.2 9.5 4.6 Q8.6 5 8.3 6.5 L7 12 Q6.6 13.6 5 13.3" stroke="#101010" stroke-width="1.1" fill="none"/><path d="M6 7.6 H10.4" stroke="#101010" stroke-width="1"/></svg><div class="a sim" style="left:25px;top:363px">PiCa2rGqF0Vs1eiB</div><div class="a sim" style="left:449px;top:363px">.text</div><svg class="a" style="left:3px;top:382px" width="16" height="16" viewBox="0 0 16 16"><defs><linearGradient id="fbar" x1="0" x2="1"><stop offset="0" stop-color="#50e0ff"/><stop offset="1" stop-color="#1830c8"/></linearGradient><linearGradient id="fbg" x1="0" y1="0" x2="1" y2="1"><stop offset="0" stop-color="#ffffff"/><stop offset="1" stop-color="#d8f8ff"/></linearGradient></defs><rect x="0.5" y="0.5" width="15" height="15" fill="url(#fbg)" stroke="#3a78e0"/><rect x="1" y="1" width="14" height="2" fill="url(#fbar)"/><path d="M11.5 5 Q10.5 4.2 9.5 4.6 Q8.6 5 8.3 6.5 L7 12 Q6.6 13.6 5 13.3" stroke="#101010" stroke-width="1.1" fill="none"/><path d="M6 7.6 H10.4" stroke="#101010" stroke-width="1"/></svg><div class="a sim" style="left:25px;top:383px">get_number_from_text</div><div class="a sim" style="left:449px;top:383px">.text</div><svg class="a" style="left:3px;top:402px" width="16" height="16" viewBox="0 0 16 16"><defs><linearGradient id="fbar" x1="0" x2="1"><stop offset="0" stop-color="#50e0ff"/><stop offset="1" stop-color="#1830c8"/></linearGradient><linearGradient id="fbg" x1="0" y1="0" x2="1" y2="1"><stop offset="0" stop-color="#ffffff"/><stop offset="1" stop-color="#d8f8ff"/></linearGradient></defs><rect x="0.5" y="0.5" width="15" height="15" fill="url(#fbg)" stroke="#3a78e0"/><rect x="1" y="1" width="14" height="2" fill="url(#fbar)"/><path d="M11.5 5 Q10.5 4.2 9.5 4.6 Q8.6 5 8.3 6.5 L7 12 Q6.6 13.6 5 13.3" stroke="#101010" stroke-width="1.1" fill="none"/><path d="M6 7.6 H10.4" stroke="#101010" stroke-width="1"/></svg><div class="a sim" style="left:25px;top:403px">IDZ04NzptW8GaHzj</div><div class="a sim" style="left:449px;top:403px">.text</div><svg class="a" style="left:3px;top:422px" width="16" height="16" viewBox="0 0 16 16"><defs><linearGradient id="fbar" x1="0" x2="1"><stop offset="0" stop-color="#50e0ff"/><stop offset="1" stop-color="#1830c8"/></linearGradient><linearGradient id="fbg" x1="0" y1="0" x2="1" y2="1"><stop offset="0" stop-color="#ffffff"/><stop offset="1" stop-color="#d8f8ff"/></linearGradient></defs><rect x="0.5" y="0.5" width="15" height="15" fill="url(#fbg)" stroke="#3a78e0"/><rect x="1" y="1" width="14" height="2" fill="url(#fbar)"/><path d="M11.5 5 Q10.5 4.2 9.5 4.6 Q8.6 5 8.3 6.5 L7 12 Q6.6 13.6 5 13.3" stroke="#101010" stroke-width="1.1" fill="none"/><path d="M6 7.6 H10.4" stroke="#101010" stroke-width="1"/></svg><div class="a sim" style="left:25px;top:423px">ol186ifyeUPhXKNl</div><div class="a sim" style="left:449px;top:423px">.text</div><svg class="a" style="left:3px;top:442px" width="16" height="16" viewBox="0 0 16 16"><defs><linearGradient id="fbar" x1="0" x2="1"><stop offset="0" stop-color="#50e0ff"/><stop offset="1" stop-color="#1830c8"/></linearGradient><linearGradient id="fbg" x1="0" y1="0" x2="1" y2="1"><stop offset="0" stop-color="#ffffff"/><stop offset="1" stop-color="#d8f8ff"/></linearGradient></defs><rect x="0.5" y="0.5" width="15" height="15" fill="url(#fbg)" stroke="#3a78e0"/><rect x="1" y="1" width="14" height="2" fill="url(#fbar)"/><path d="M11.5 5 Q10.5 4.2 9.5 4.6 Q8.6 5 8.3 6.5 L7 12 Q6.6 13.6 5 13.3" stroke="#101010" stroke-width="1.1" fill="none"/><path d="M6 7.6 H10.4" stroke="#101010" stroke-width="1"/></svg><div class="a sim" style="left:25px;top:443px">cuC5zWc4iL4kPgAn</div><div class="a sim" style="left:449px;top:443px">.text</div><svg class="a" style="left:3px;top:462px" width="16" height="16" viewBox="0 0 16 16"><defs><linearGradient id="fbar" x1="0" x2="1"><stop offset="0" stop-color="#50e0ff"/><stop offset="1" stop-color="#1830c8"/></linearGradient><linearGradient id="fbg" x1="0" y1="0" x2="1" y2="1"><stop offset="0" stop-color="#ffffff"/><stop offset="1" stop-color="#d8f8ff"/></linearGradient></defs><rect x="0.5" y="0.5" width="15" height="15" fill="url(#fbg)" stroke="#3a78e0"/><rect x="1" y="1" width="14" height="2" fill="url(#fbar)"/><path d="M11.5 5 Q10.5 4.2 9.5 4.6 Q8.6 5 8.3 6.5 L7 12 Q6.6 13.6 5 13.3" stroke="#101010" stroke-width="1.1" fill="none"/><path d="M6 7.6 H10.4" stroke="#101010" stroke-width="1"/></svg><div class="a sim" style="left:25px;top:463px">LC22j90ZfANw81M7</div><div class="a sim" style="left:449px;top:463px">.text</div><svg class="a" style="left:3px;top:482px" width="16" height="16" viewBox="0 0 16 16"><defs><linearGradient id="fbar" x1="0" x2="1"><stop offset="0" stop-color="#50e0ff"/><stop offset="1" stop-color="#1830c8"/></linearGradient><linearGradient id="fbg" x1="0" y1="0" x2="1" y2="1"><stop offset="0" stop-color="#ffffff"/><stop offset="1" stop-color="#d8f8ff"/></linearGradient></defs><rect x="0.5" y="0.5" width="15" height="15" fill="url(#fbg)" stroke="#3a78e0"/><rect x="1" y="1" width="14" height="2" fill="url(#fbar)"/><path d="M11.5 5 Q10.5 4.2 9.5 4.6 Q8.6 5 8.3 6.5 L7 12 Q6.6 13.6 5 13.3" stroke="#101010" stroke-width="1.1" fill="none"/><path d="M6 7.6 H10.4" stroke="#101010" stroke-width="1"/></svg><div class="a sim" style="left:25px;top:483px">H7XMCPIhJup38DuP</div><div class="a sim" style="left:449px;top:483px">.text</div><svg class="a" style="left:3px;top:502px" width="16" height="16" viewBox="0 0 16 16"><defs><linearGradient id="fbar" x1="0" x2="1"><stop offset="0" stop-color="#50e0ff"/><stop offset="1" stop-color="#1830c8"/></linearGradient><linearGradient id="fbg" x1="0" y1="0" x2="1" y2="1"><stop offset="0" stop-color="#ffffff"/><stop offset="1" stop-color="#d8f8ff"/></linearGradient></defs><rect x="0.5" y="0.5" width="15" height="15" fill="url(#fbg)" stroke="#3a78e0"/><rect x="1" y="1" width="14" height="2" fill="url(#fbar)"/><path d="M11.5 5 Q10.5 4.2 9.5 4.6 Q8.6 5 8.3 6.5 L7 12 Q6.6 13.6 5 13.3" stroke="#101010" stroke-width="1.1" fill="none"/><path d="M6 7.6 H10.4" stroke="#101010" stroke-width="1"/></svg><div class="a sim" style="left:25px;top:503px">yiA21g0kW8v2v0p0</div><div class="a sim" style="left:449px;top:503px">.text</div><svg class="a" style="left:3px;top:522px" width="16" height="16" viewBox="0 0 16 16"><defs><linearGradient id="fbar" x1="0" x2="1"><stop offset="0" stop-color="#50e0ff"/><stop offset="1" stop-color="#1830c8"/></linearGradient><linearGradient id="fbg" x1="0" y1="0" x2="1" y2="1"><stop offset="0" stop-color="#ffffff"/><stop offset="1" stop-color="#d8f8ff"/></linearGradient></defs><rect x="0.5" y="0.5" width="15" height="15" fill="url(#fbg)" stroke="#3a78e0"/><rect x="1" y="1" width="14" height="2" fill="url(#fbar)"/><path d="M11.5 5 Q10.5 4.2 9.5 4.6 Q8.6 5 8.3 6.5 L7 12 Q6.6 13.6 5 13.3" stroke="#101010" stroke-width="1.1" fill="none"/><path d="M6 7.6 H10.4" stroke="#101010" stroke-width="1"/></svg><div class="a sim" style="left:25px;top:523px">YlfqRhWLKVqMFbxN</div><div class="a sim" style="left:449px;top:523px">.text</div><svg class="a" style="left:3px;top:542px" width="16" height="16" viewBox="0 0 16 16"><defs><linearGradient id="fbar" x1="0" x2="1"><stop offset="0" stop-color="#50e0ff"/><stop offset="1" stop-color="#1830c8"/></linearGradient><linearGradient id="fbg" x1="0" y1="0" x2="1" y2="1"><stop offset="0" stop-color="#ffffff"/><stop offset="1" stop-color="#d8f8ff"/></linearGradient></defs><rect x="0.5" y="0.5" width="15" height="15" fill="url(#fbg)" stroke="#3a78e0"/><rect x="1" y="1" width="14" height="2" fill="url(#fbar)"/><path d="M11.5 5 Q10.5 4.2 9.5 4.6 Q8.6 5 8.3 6.5 L7 12 Q6.6 13.6 5 13.3" stroke="#101010" stroke-width="1.1" fill="none"/><path d="M6 7.6 H10.4" stroke="#101010" stroke-width="1"/></svg><div class="a sim" style="left:25px;top:543px">XBKrkXaghfenXrk6</div><div class="a sim" style="left:449px;top:543px">.text</div><svg class="a" style="left:3px;top:562px" width="16" height="16" viewBox="0 0 16 16"><defs><linearGradient id="fbar" x1="0" x2="1"><stop offset="0" stop-color="#50e0ff"/><stop offset="1" stop-color="#1830c8"/></linearGradient><linearGradient id="fbg" x1="0" y1="0" x2="1" y2="1"><stop offset="0" stop-color="#ffffff"/><stop offset="1" stop-color="#d8f8ff"/></linearGradient></defs><rect x="0.5" y="0.5" width="15" height="15" fill="url(#fbg)" stroke="#3a78e0"/><rect x="1" y="1" width="14" height="2" fill="url(#fbar)"/><path d="M11.5 5 Q10.5 4.2 9.5 4.6 Q8.6 5 8.3 6.5 L7 12 Q6.6 13.6 5 13.3" stroke="#101010" stroke-width="1.1" fill="none"/><path d="M6 7.6 H10.4" stroke="#101010" stroke-width="1"/></svg><div class="a sim" style="left:25px;top:563px">within_module_constprop_2</div><div class="a sim" style="left:449px;top:563px">.text</div><svg class="a" style="left:3px;top:582px" width="16" height="16" viewBox="0 0 16 16"><defs><linearGradient id="fbar" x1="0" x2="1"><stop offset="0" stop-color="#50e0ff"/><stop offset="1" stop-color="#1830c8"/></linearGradient><linearGradient id="fbg" x1="0" y1="0" x2="1" y2="1"><stop offset="0" stop-color="#ffffff"/><stop offset="1" stop-color="#d8f8ff"/></linearGradient></defs><rect x="0.5" y="0.5" width="15" height="15" fill="url(#fbg)" stroke="#3a78e0"/><rect x="1" y="1" width="14" height="2" fill="url(#fbar)"/><path d="M11.5 5 Q10.5 4.2 9.5 4.6 Q8.6 5 8.3 6.5 L7 12 Q6.6 13.6 5 13.3" stroke="#101010" stroke-width="1.1" fill="none"/><path d="M6 7.6 H10.4" stroke="#101010" stroke-width="1"/></svg><div class="a sim" style="left:25px;top:583px">f9H7BoFQyrMd2a5Z</div><div class="a sim" style="left:449px;top:583px">.text</div><svg class="a" style="left:3px;top:602px" width="16" height="16" viewBox="0 0 16 16"><defs><linearGradient id="fbar" x1="0" x2="1"><stop offset="0" stop-color="#50e0ff"/><stop offset="1" stop-color="#1830c8"/></linearGradient><linearGradient id="fbg" x1="0" y1="0" x2="1" y2="1"><stop offset="0" stop-color="#ffffff"/><stop offset="1" stop-color="#d8f8ff"/></linearGradient></defs><rect x="0.5" y="0.5" width="15" height="15" fill="url(#fbg)" stroke="#3a78e0"/><rect x="1" y="1" width="14" height="2" fill="url(#fbar)"/><path d="M11.5 5 Q10.5 4.2 9.5 4.6 Q8.6 5 8.3 6.5 L7 12 Q6.6 13.6 5 13.3" stroke="#101010" stroke-width="1.1" fill="none"/><path d="M6 7.6 H10.4" stroke="#101010" stroke-width="1"/></svg><div class="a sim" style="left:25px;top:603px">kIaIPhGH3Zg0C0Y0</div><div class="a sim" style="left:449px;top:603px">.text</div><svg class="a" style="left:3px;top:622px" width="16" height="16" viewBox="0 0 16 16"><defs><linearGradient id="fbar" x1="0" x2="1"><stop offset="0" stop-color="#50e0ff"/><stop offset="1" stop-color="#1830c8"/></linearGradient><linearGradient id="fbg" x1="0" y1="0" x2="1" y2="1"><stop offset="0" stop-color="#ffffff"/><stop offset="1" stop-color="#d8f8ff"/></linearGradient></defs><rect x="0.5" y="0.5" width="15" height="15" fill="url(#fbg)" stroke="#3a78e0"/><rect x="1" y="1" width="14" height="2" fill="url(#fbar)"/><path d="M11.5 5 Q10.5 4.2 9.5 4.6 Q8.6 5 8.3 6.5 L7 12 Q6.6 13.6 5 13.3" stroke="#101010" stroke-width="1.1" fill="none"/><path d="M6 7.6 H10.4" stroke="#101010" stroke-width="1"/></svg><div class="a sim" style="left:25px;top:623px">L8d962tHZygRCPnI</div><div class="a sim" style="left:449px;top:623px">.text</div><svg class="a" style="left:3px;top:642px" width="16" height="16" viewBox="0 0 16 16"><defs><linearGradient id="fbar" x1="0" x2="1"><stop offset="0" stop-color="#50e0ff"/><stop offset="1" stop-color="#1830c8"/></linearGradient><linearGradient id="fbg" x1="0" y1="0" x2="1" y2="1"><stop offset="0" stop-color="#ffffff"/><stop offset="1" stop-color="#d8f8ff"/></linearGradient></defs><rect x="0.5" y="0.5" width="15" height="15" fill="url(#fbg)" stroke="#3a78e0"/><rect x="1" y="1" width="14" height="2" fill="url(#fbar)"/><path d="M11.5 5 Q10.5 4.2 9.5 4.6 Q8.6 5 8.3 6.5 L7 12 Q6.6 13.6 5 13.3" stroke="#101010" stroke-width="1.1" fill="none"/><path d="M6 7.6 H10.4" stroke="#101010" stroke-width="1"/></svg><div class="a sim" style="left:25px;top:643px">gnm56vTPlRSVSV5g</div><div class="a sim" style="left:449px;top:643px">.text</div><svg class="a" style="left:3px;top:662px" width="16" height="16" viewBox="0 0 16 16"><defs><linearGradient id="fbar" x1="0" x2="1"><stop offset="0" stop-color="#50e0ff"/><stop offset="1" stop-color="#1830c8"/></linearGradient><linearGradient id="fbg" x1="0" y1="0" x2="1" y2="1"><stop offset="0" stop-color="#ffffff"/><stop offset="1" stop-color="#d8f8ff"/></linearGradient></defs><rect x="0.5" y="0.5" width="15" height="15" fill="url(#fbg)" stroke="#3a78e0"/><rect x="1" y="1" width="14" height="2" fill="url(#fbar)"/><path d="M11.5 5 Q10.5 4.2 9.5 4.6 Q8.6 5 8.3 6.5 L7 12 Q6.6 13.6 5 13.3" stroke="#101010" stroke-width="1.1" fill="none"/><path d="M6 7.6 H10.4" stroke="#101010" stroke-width="1"/></svg><div class="a sim" style="left:25px;top:663px">iVZGVlapCNjfdT8V</div><div class="a sim" style="left:449px;top:663px">.text</div><svg class="a" style="left:3px;top:682px" width="16" height="16" viewBox="0 0 16 16"><defs><linearGradient id="fbar" x1="0" x2="1"><stop offset="0" stop-color="#50e0ff"/><stop offset="1" stop-color="#1830c8"/></linearGradient><linearGradient id="fbg" x1="0" y1="0" x2="1" y2="1"><stop offset="0" stop-color="#ffffff"/><stop offset="1" stop-color="#d8f8ff"/></linearGradient></defs><rect x="0.5" y="0.5" width="15" height="15" fill="url(#fbg)" stroke="#3a78e0"/><rect x="1" y="1" width="14" height="2" fill="url(#fbar)"/><path d="M11.5 5 Q10.5 4.2 9.5 4.6 Q8.6 5 8.3 6.5 L7 12 Q6.6 13.6 5 13.3" stroke="#101010" stroke-width="1.1" fill="none"/><path d="M6 7.6 H10.4" stroke="#101010" stroke-width="1"/></svg><div class="a sim" style="left:25px;top:683px">AaKjbPN0qbMpvGTx</div><div class="a sim" style="left:449px;top:683px">.text</div><svg class="a" style="left:3px;top:702px" width="16" height="16" viewBox="0 0 16 16"><defs><linearGradient id="fbar" x1="0" x2="1"><stop offset="0" stop-color="#50e0ff"/><stop offset="1" stop-color="#1830c8"/></linearGradient><linearGradient id="fbg" x1="0" y1="0" x2="1" y2="1"><stop offset="0" stop-color="#ffffff"/><stop offset="1" stop-color="#d8f8ff"/></linearGradient></defs><rect x="0.5" y="0.5" width="15" height="15" fill="url(#fbg)" stroke="#3a78e0"/><rect x="1" y="1" width="14" height="2" fill="url(#fbar)"/><path d="M11.5 5 Q10.5 4.2 9.5 4.6 Q8.6 5 8.3 6.5 L7 12 Q6.6 13.6 5 13.3" stroke="#101010" stroke-width="1.1" fill="none"/><path d="M6 7.6 H10.4" stroke="#101010" stroke-width="1"/></svg><div class="a sim" style="left:25px;top:703px">get_order</div><div class="a sim" style="left:449px;top:703px">.text</div><svg class="a" style="left:3px;top:722px" width="16" height="16" viewBox="0 0 16 16"><defs><linearGradient id="fbar" x1="0" x2="1"><stop offset="0" stop-color="#50e0ff"/><stop offset="1" stop-color="#1830c8"/></linearGradient><linearGradient id="fbg" x1="0" y1="0" x2="1" y2="1"><stop offset="0" stop-color="#ffffff"/><stop offset="1" stop-color="#d8f8ff"/></linearGradient></defs><rect x="0.5" y="0.5" width="15" height="15" fill="url(#fbg)" stroke="#3a78e0"/><rect x="1" y="1" width="14" height="2" fill="url(#fbar)"/><path d="M11.5 5 Q10.5 4.2 9.5 4.6 Q8.6 5 8.3 6.5 L7 12 Q6.6 13.6 5 13.3" stroke="#101010" stroke-width="1.1" fill="none"/><path d="M6 7.6 H10.4" stroke="#101010" stroke-width="1"/></svg><div class="a sim" style="left:25px;top:723px">kzalloc_constprop_1</div><div class="a sim" style="left:449px;top:723px">.text</div></div>
<div class="a" style="left:484px;top:184px;width:25px;height:771px;background:#f0f0f0"></div>
<div class="a" style="left:491px;top:210px;width:11px;height:251px;background:#858585"></div>
<div class="a" style="left:1px;top:955px;width:508px;height:26px;background:#f0f0f0"></div>
<div class="a" style="left:27px;top:963px;width:143px;height:11px;background:#858585"></div>
<div class="a" style="left:0;top:1015px;width:510px;height:30px;background:#f0f0f0;border:1px solid #7d8492;box-shadow:inset 1px 1px 0 #fff"></div>
<svg class="a" style="left:5px;top:1022px" width="15" height="15" viewBox="0 0 15 15"><g fill="#fff" stroke="#1a5ad0" stroke-width="1.2"><rect x="5.5" y="0.6" width="3.5" height="3"/><rect x="2.5" y="5.6" width="3.5" height="3"/><rect x="8.5" y="5.6" width="3.5" height="3"/><rect x="0.6" y="10.6" width="3" height="3.5"/><rect x="4.6" y="10.6" width="3" height="3.5"/><rect x="8.6" y="10.6" width="3" height="3.5"/><rect x="11.6" y="10.6" width="3" height="3.5"/></g></svg>
<div class="a sim" style="left:29px;top:1023px">Graph overview</div>
<svg class="a" style="left:429px;top:1023px" width="74" height="15" viewBox="0 0 74 15"><rect x="1" y="1" width="14" height="13" fill="none" stroke="#333" stroke-width="2"/><rect x="1" y="1" width="14" height="3" fill="#333"/><rect x="37" y="1" width="8" height="8" fill="none" stroke="#333" stroke-width="1.6"/><rect x="37" y="0.5" width="8" height="2" fill="#333"/><rect x="33" y="5.5" width="8" height="8" fill="#f0f0f0" stroke="#333" stroke-width="1.6"/><rect x="33" y="5" width="8" height="2" fill="#333"/><path d="M61 2 L72 13 M72 2 L61 13" stroke="#333" stroke-width="2.4"/></svg>
<div class="a" style="left:0;top:1046px;width:510px;height:178px;background:linear-gradient(#fff 0%,#e2f6fc 100%)"></div>
<svg class="a" style="left:0;top:1046px" width="510" height="178" viewBox="0 1046 510 178"><defs><filter id="bl"><feGaussianBlur stdDeviation="1"/></filter></defs><rect x="220" y="1050" width="76" height="123" fill="#777" opacity="0.55" filter="url(#bl)"/><rect x="217.5" y="1047.5" width="75" height="122" fill="#fff" stroke="#000" stroke-width="1.2"/><path d="M253 1171.5 H283.5 V1214.5 H270.5 V1201.5" fill="none" stroke="#4848ff" stroke-width="1.4"/><rect x="242.5" y="1172.5" width="25" height="11" fill="#fff" stroke="#000" stroke-width="1.2"/><path d="M238 1185 H255" stroke="#e02020" stroke-width="1.5"/><path d="M256 1185 H272" stroke="#208020" stroke-width="1.5"/><rect x="222.5" y="1186.5" width="34" height="26" fill="#fff" stroke="#000" stroke-width="1.2"/><rect x="259.5" y="1186.5" width="22" height="15" fill="#fff" stroke="#000" stroke-width="1.2"/><path d="M229 1215 H240" stroke="#e02020" stroke-width="1.5"/><path d="M240 1215 H250" stroke="#208020" stroke-width="1.5"/><rect x="221.5" y="1216.5" width="15" height="13" fill="#fff" stroke="#000" stroke-width="1.2"/><rect x="238.5" y="1216.5" width="22" height="13" fill="#fff" stroke="#000" stroke-width="1.2"/><path d="M172.5 1048 V1128.5 H343.5 V1048" fill="none" stroke="#000" stroke-width="1" stroke-dasharray="1.5 1.5"/></svg>
<div class="a" style="left:510px;top:148px;width:5px;height:1076px;background:#f0f0f0"></div>
<div class="a" style="left:515px;top:148px;width:1681px;height:35px;background:#f0f0f0"></div>
<div class="a" style="left:515px;top:181px;width:1681px;height:2px;background:#a8a8a8"></div>
<div class="a" style="left:514px;top:151px;width:342px;height:32px;background:#f9f9f9;border:1px solid #e8e8e8;border-bottom:none"></div>
<div class="a sim" style="left:514px;width:332px;text-align:center;top:161px">IDA View-A</div>
<svg class="a" style="left:817px;top:160px" width="14" height="14" viewBox="0 0 14 14"><rect x="0" y="0" width="14" height="14" rx="2" fill="#e0603c"/><path d="M4 4 L10 10 M10 4 L4 10" stroke="#fff" stroke-width="1.8"/></svg>
<div class="a" style="left:856px;top:153px;width:339px;height:28px;background:#f0f0f0;border-right:1px solid #dcdcdc"></div>
<div class="a sim" style="left:856px;width:329px;text-align:center;top:163px">Hex View-1</div>
<svg class="a" style="left:1156px;top:162px" width="14" height="14" viewBox="0 0 14 14"><rect x="0" y="0" width="14" height="14" rx="2" fill="#b8b8b8"/><path d="M4 4 L10 10 M10 4 L4 10" stroke="#fff" stroke-width="1.8"/></svg>
<div class="a" style="left:1195px;top:153px;width:342px;height:28px;background:#f0f0f0;border-right:1px solid #dcdcdc"></div>
<div class="a sim" style="left:1195px;width:332px;text-align:center;top:163px">Structures</div>
<svg class="a" style="left:1498px;top:162px" width="14" height="14" viewBox="0 0 14 14"><rect x="0" y="0" width="14" height="14" rx="2" fill="#b8b8b8"/><path d="M4 4 L10 10 M10 4 L4 10" stroke="#fff" stroke-width="1.8"/></svg>
<div class="a" style="left:1537px;top:153px;width:341px;height:28px;background:#f0f0f0;border-right:1px solid #dcdcdc"></div>
<div class="a sim" style="left:1537px;width:331px;text-align:center;top:163px">Enums</div>
<svg class="a" style="left:1839px;top:162px" width="14" height="14" viewBox="0 0 14 14"><rect x="0" y="0" width="14" height="14" rx="2" fill="#b8b8b8"/><path d="M4 4 L10 10 M10 4 L4 10" stroke="#fff" stroke-width="1.8"/></svg>
<div class="a" style="left:1878px;top:153px;width:341px;height:28px;background:#f0f0f0;border-right:1px solid #dcdcdc"></div>
<div class="a sim" style="left:1878px;width:331px;text-align:center;top:163px">Imports</div>
<svg class="a" style="left:2180px;top:162px" width="14" height="14" viewBox="0 0 14 14"><rect x="0" y="0" width="14" height="14" rx="2" fill="#b8b8b8"/><path d="M4 4 L10 10 M10 4 L4 10" stroke="#fff" stroke-width="1.8"/></svg>
<svg class="a" style="left:532px;top:158px" width="17" height="17" viewBox="0 0 17 17"><rect x="0.5" y="0.5" width="11" height="12" fill="#eaf4ff" stroke="#3a7ae0"/><rect x="1" y="1" width="10" height="2" fill="#3a7ae0"/><rect x="5.5" y="4.5" width="11" height="12" fill="#f4f8ff" stroke="#2a5ab0"/><path d="M7.5 8 H14.5 M7.5 10.5 H14.5 M7.5 13 H14.5" stroke="#2a5ab0"/></svg>
<svg class="a" style="left:872px;top:160px" width="16" height="16" viewBox="0 0 16 16"><rect x="0.5" y="0.5" width="15" height="15" fill="#f4f8ff" stroke="#3a6ae0"/><rect x="1" y="1" width="14" height="2" fill="#3a7ae0"/><path d="M8 4.5 L12 6.8 V11.2 L8 13.5 L4 11.2 V6.8Z" fill="none" stroke="#2050d0" stroke-width="1.2"/></svg>
<svg class="a" style="left:1213px;top:160px" width="16" height="16" viewBox="0 0 16 16"><rect x="0.5" y="0.5" width="15" height="15" fill="#f4f8ff" stroke="#3a6ae0"/><rect x="1" y="1" width="14" height="2" fill="#3a7ae0"/><text x="8" y="13.5" font-size="10" font-weight="bold" text-anchor="middle" fill="#1a3e90" font-family="Liberation Sans">A</text></svg>
<svg class="a" style="left:1555px;top:159px" width="17" height="17" viewBox="0 0 17 17"><rect x="0.5" y="0.5" width="15" height="15" fill="#f4f8ff" stroke="#3a6ae0"/><rect x="1" y="1" width="14" height="2" fill="#3a7ae0"/><path d="M3 6 H5 M3 9 H5 M3 12 H5 M7 6 H13 M7 9 H13 M7 12 H13" stroke="#2050d0" stroke-width="1.2"/></svg>
<svg class="a" style="left:1896px;top:159px" width="17" height="17" viewBox="0 0 17 17"><rect x="3.5" y="2.5" width="13" height="14" fill="#f4f8ff" stroke="#2a5ab0"/><rect x="0.5" y="0.5" width="12" height="4" fill="#3a7ae0"/><path d="M1 9 H6 V6.5 L9 10 L6 13.5 V11 H1Z" fill="#20a020"/><path d="M10 8 H15 M10 11 H15 M10 14 H15" stroke="#2a5ab0"/></svg>
<div class="a" style="left:515px;top:183px;width:1681px;height:1021px;background:linear-gradient(#ffffff 0%,#dff5fc 100%)"></div>
<div class="a" style="left:1049px;top:226px;width:897px;height:980px;box-shadow:3px 3px 3px rgba(0,0,0,0.55)"></div>
<div class="a" style="left:1049px;top:226px;width:897px;height:980px;background:#fff;border:1px solid #000;border-bottom:none"></div>
<div class="a" style="left:1050px;top:227px;width:895px;height:18px;background:#a0cfcf;border-bottom:2px solid #000"></div>
<svg class="a" style="left:1051px;top:228px" width="16" height="16" viewBox="0 0 16 16"><defs><linearGradient id="hue" x1="0" x2="1"><stop offset="0" stop-color="#ffa000"/><stop offset="0.2" stop-color="#ffff00"/><stop offset="0.4" stop-color="#00ff40"/><stop offset="0.6" stop-color="#00ffff"/><stop offset="0.8" stop-color="#4040ff"/><stop offset="1" stop-color="#ff00ff"/></linearGradient><linearGradient id="dk" x1="0" x2="0" y1="0" y2="1"><stop offset="0" stop-color="#fff" stop-opacity="0.5"/><stop offset="0.3" stop-color="#000" stop-opacity="0"/><stop offset="1" stop-color="#000" stop-opacity="1"/></linearGradient></defs><rect x="0.5" y="0.5" width="15" height="15" fill="#000828"/><rect x="1.5" y="1.5" width="13" height="13" fill="url(#hue)"/><rect x="1.5" y="1.5" width="13" height="13" fill="url(#dk)"/></svg>
<svg class="a" style="left:1070px;top:228px" width="17" height="16" viewBox="0 0 17 16"><rect x="0.5" y="6" width="15" height="9.5" fill="#fff" stroke="#0a2a40"/><rect x="2" y="8" width="12" height="6" fill="#1a2aa0"/><path d="M3 13 L13 2 L14.5 3.5 L4.5 14.5Z" fill="#f8c020" stroke="#a07010" stroke-width="0.5"/><circle cx="14" cy="2.5" r="1.5" fill="#80d0ff"/></svg>
<svg class="a" style="left:1091px;top:228px" width="16" height="16" viewBox="0 0 16 16"><rect x="0.5" y="0.5" width="15" height="14" fill="#fff" stroke="#3a7ae0"/><rect x="1" y="1" width="14" height="2" fill="#40b0f0"/><path d="M3 5 V11 H7" stroke="#3050d0" fill="none"/><path d="M5 6 H13" stroke="#3050d0" stroke-dasharray="2 1"/><rect x="8" y="9" width="6" height="2.5" fill="#d03030"/></svg>
<div class="a" style="left:1051px;top:248px;width:893px;height:23px;background:#e4e4e4"></div>
<div class="a" style="left:1052px;top:248px;width:894px;height:956px;overflow:hidden"><div class="a ida" style="top:2px;color:#0000ff">;</div><div class="a ida" style="top:25px;color:#0000ff">; +-------------------------------------------------------------------------+</div><div class="a ida" style="top:48px;color:#0000ff">; |      This file was generated by The Interactive Disassembler (IDA)      |</div><div class="a ida" style="top:71px;color:#0000ff">; |           Copyright (c) 2023 Hex-Rays, &lt;support@hex-rays.com&gt;           |</div><div class="a ida" style="top:94px;color:#0000ff">; +-------------------------------------------------------------------------+</div><div class="a ida" style="top:117px;color:#0000ff">;</div><div class="a ida" style="top:140px;color:#0000ff">; Input SHA256 : AC25384A1307F8C60FB7CE23B9B5583D795F686657DD62A7775144105535CC60</div><div class="a ida" style="top:163px;color:#0000ff">; Input MD5    : 78EDBA7CBD107EB6E3D2F90F5ECA734E</div><div class="a ida" style="top:186px;color:#0000ff">; Input CRC32  : 609FFE7E</div><div class="a ida" style="top:232px;color:#0000ff">; File Name   : C:\Users\Lenovo\Desktop\system\system-upgrade.ko</div><div class="a ida" style="top:255px;color:#0000ff">; Format      : ELF64 for x86-64 (Relocatable)</div><div class="a ida" style="top:278px;color:#0000ff">;</div><div class="a ida" style="top:301px;color:#0000ff">; Source File : &#x27;F3gBxN3SJ2d5Lznm.c&#x27;</div><div class="a ida" style="top:324px;color:#0000ff">; Source File : &#x27;Xsl8HDBfoBNuZKkf.c&#x27;</div><div class="a ida" style="top:347px;color:#0000ff">; Source File : &#x27;ktfM6Mr46igckvWY.c&#x27;</div><div class="a ida" style="top:370px;color:#0000ff">; Source File : &#x27;G7OwVlfOpGaywx89.c&#x27;</div><div class="a ida" style="top:393px;color:#0000ff">; Source File : &#x27;JZvOwPKZwiknLLGj.c&#x27;</div><div class="a ida" style="top:416px;color:#0000ff">; Source File : &#x27;KvYd5SGUrkL4Fw4a.c&#x27;</div><div class="a ida" style="top:439px;color:#0000ff">; Source File : &#x27;jI97tyy1wgBkCTyo.c&#x27;</div><div class="a ida" style="top:462px;color:#0000ff">; Source File : &#x27;KAZ04JUcvdO1HOGU.c&#x27;</div><div class="a ida" style="top:485px;color:#0000ff">; Source File : &#x27;pdB4x62MrfsScAjc.c&#x27;</div><div class="a ida" style="top:508px;color:#0000ff">; Source File : &#x27;ScjyMB0YC7zbrDiY.c&#x27;</div><div class="a ida" style="top:531px;color:#0000ff">; Source File : &#x27;VIdyTXQAkTAdXVDz.c&#x27;</div><div class="a ida" style="top:554px;color:#0000ff">; Source File : &#x27;ytarVfSJ61uPqDne.c&#x27;</div><div class="a ida" style="top:577px;color:#0000ff">; Source File : &#x27;nkjVOHqTgritV8up.mod.c&#x27;</div><div class="a ida" style="top:623px;color:#0000ff">.686p</div><div class="a ida" style="top:646px;color:#0000ff">.mmx</div><div class="a ida" style="top:669px;color:#0000ff">.model flat</div><div class="a ida" style="top:692px;color:#0000ff">.intel_syntax noprefix</div><div class="a ida" style="top:761px;color:#808080">; Segment type: Pure code</div><div class="a ida" style="top:784px;color:#808080">; Segment permissions: Read/Execute</div><div class="a ida" style="top:807px;color:#0000ff">_text segment para public &#x27;CODE&#x27; use64</div><div class="a ida" style="top:830px;color:#0000ff">assume cs:_text</div><div class="a ida" style="top:853px;color:#0000ff">assume es:nothing, ss:nothing, ds:_data, fs:nothing, gs:nothing</div><div class="a ida" style="top:945px;color:#0000ff">public tnZVpIShr75djGgY</div></div>
<div class="a" style="left:514px;top:1204px;width:1682px;height:20px;background:#f0f0f0"></div>
<div class="a stat" style="left:518px">100.00%</div>
<div class="a stat" style="left:604px">(-534,-42)</div>
<div class="a stat" style="left:720px">(489,1016)</div>
<div class="a stat" style="left:833px">00000070</div>
<div class="a stat" style="left:927px">0000000000000000: tnZVpIShr75djGgY</div>
<div class="a stat" style="left:1308px">(Synchronized with Hex View-1)</div>
<div class="a" style="left:595px;top:1206px;width:1px;height:18px;background:#d4d4d4"></div>
<div class="a" style="left:711px;top:1206px;width:1px;height:18px;background:#d4d4d4"></div>
<div class="a" style="left:827px;top:1206px;width:1px;height:18px;background:#d4d4d4"></div>
<div class="a" style="left:921px;top:1206px;width:1px;height:18px;background:#d4d4d4"></div>
<div class="a" style="left:1304px;top:1206px;width:1px;height:18px;background:#d4d4d4"></div>
<div class="a" style="left:1640px;top:1206px;width:1px;height:18px;background:#d4d4d4"></div>
</body></html>
